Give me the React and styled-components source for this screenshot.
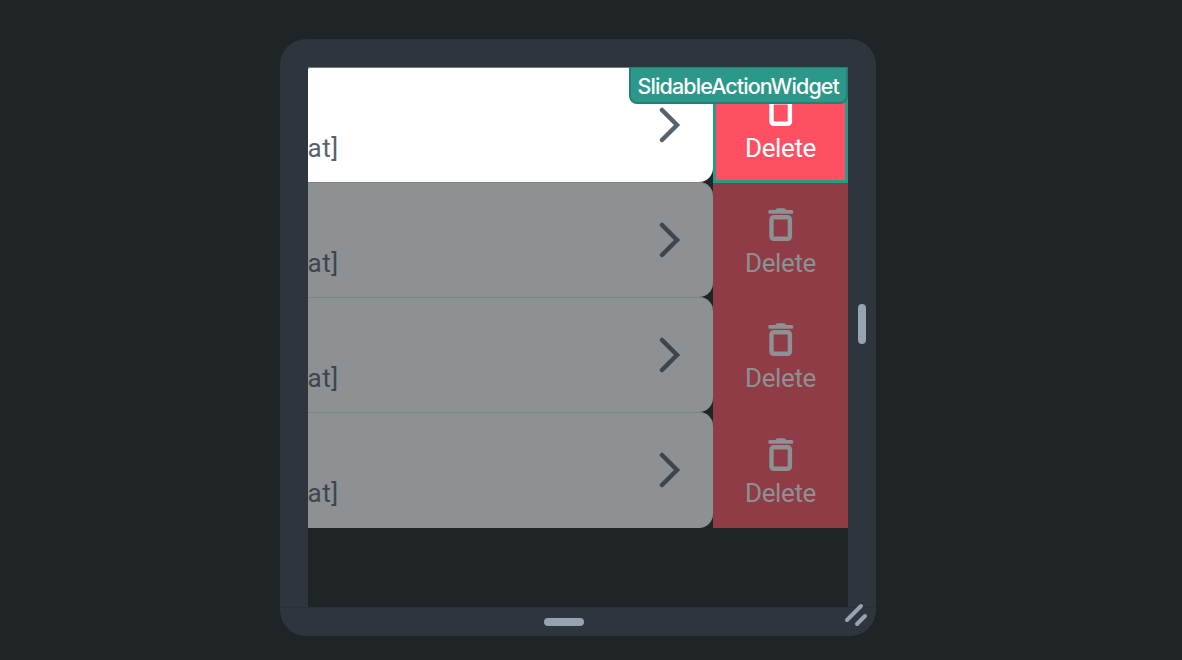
import React from "react";
import styled, { createGlobalStyle } from "styled-components";

const GlobalStyle = createGlobalStyle`
  * { box-sizing: border-box; }
  body { margin: 0; background: #1f2427; font-family: Roboto, sans-serif; }
`;

const Page = styled.main`
  height: 660px;
  padding: 39px 0 0 280px;
  background: #1f2427;
  overflow: hidden;
`;

const Frame = styled.section`
  position: relative;
  width: 596px;
  height: 596.5px;
  padding: 28px;
  border-radius: 26px;
  background: #2e353d;
`;

const Screen = styled.div`
  position: relative;
  width: 540px;
  height: 540px;
  background: #1f2427;
  overflow: hidden;
`;

const Row = styled.div`
  display: flex;
  height: 115.15px;
  --tile: ${(p) => (p.$active ? "#ffffff" : "#8d9193")};
  --ink: ${(p) => (p.$active ? "#57636c" : "#3d464c")};
  --action: ${(p) => (p.$active ? "#ff5063" : "#8f3c46")};
  --label: ${(p) => (p.$active ? "#ffffff" : "#8d9193")};
`;

const Tile = styled.div`
  display: flex;
  justify-content: space-between;
  width: 405px;
  padding: 0 32px 0 0;
  border-radius: ${(p) => (p.$active ? "2px 14px 14px 0" : "0 14px 14px 0")};
  background: var(--tile);
  box-shadow: inset 0 1px ${(p) => (p.$active ? "#747a7f" : "#7d8285")};
  color: var(--ink);
`;

const Subtitle = styled.span`
  padding-top: 64.8px;
  margin-left: -0.6px;
  font-size: 26px;
  line-height: 32px;
  letter-spacing: 0.6px;
`;

const Chevron = styled.svg`
  width: 22px;
  height: 36px;
  margin-top: 40px;
  fill: none;
  stroke: currentColor;
  stroke-width: 4.5;
  stroke-linecap: round;
  stroke-linejoin: miter;
`;

const Action = styled.div`
  display: flex;
  flex-direction: column;
  align-items: center;
  width: 135px;
  padding-top: ${(p) => (p.$active ? 23 : 26)}px;
  position: relative;
  z-index: ${(p) => (p.$active ? 1 : 0)};
  border: ${(p) => (p.$active ? "3px solid #2c9889" : "0")};
  margin-bottom: ${(p) => (p.$active ? "-1px" : "0")};
  background: var(--action);
  color: var(--label);
`;

const ActionText = styled.span`
  margin-top: 4.8px;
  font-size: 26px;
  line-height: 32px;
  letter-spacing: -0.4px;
`;

const Trash = styled.svg`
  display: block;
  width: 26px;
  height: 34px;
`;

const Badge = styled.div`
  position: absolute;
  z-index: 2;
  top: 0;
  right: 0;
  width: 219.5px;
  height: 37px;
  border: 2px solid #257f74;
  border-top-width: 1px;
  border-radius: 0 0 8px 8px;
  background: #2c9889;
  color: #fff;
  font: 500 21.5px/36px Inter, sans-serif;
  letter-spacing: -0.9px;
  text-align: center;
  white-space: nowrap;
`;

const Handle = styled.span`
  position: absolute;
  border-radius: 4px;
  background: #96a3b0;
  ${(p) => p.$side
    ? "right: 10px; top: 264.5px; width: 8px; height: 40px;"
    : "left: 264px; bottom: 10px; width: 40px; height: 8px;"}
`;

const Seam = styled.span`
  position: absolute;
  left: 0;
  bottom: 28px;
  width: 100%;
  height: 1px;
  background: #293138;
`;

const ResizeGrip = styled.svg`
  position: absolute;
  right: 8.5px;
  bottom: 8.5px;
  width: 24px;
  height: 26px;
  stroke: #96a3b0;
  stroke-width: 4;
  stroke-linecap: round;
`;

const TrashIcon = () => (
  <Trash viewBox="0 0 26 34">
    <path d="M1.6 2.1H7.3L9 .3H16.6L18.3 2.1H24Q25.3 2.1 25.3 3.9T24 5.8H1.6Q.3 5.8.3 3.9T1.6 2.1Z" fill="currentColor" />
    <rect x="3.5" y="9.2" width="18.4" height="21.6" rx="2.2" fill="none" stroke="currentColor" strokeWidth="4.4" />
  </Trash>
);

const SlidableRow = ({ active }) => (
  <Row $active={active}>
    <Tile $active={active}>
      <Subtitle>at]</Subtitle>
      <Chevron viewBox="0 0 22 36"><path d="M3 3L18 18L3 33" /></Chevron>
    </Tile>
    <Action $active={active}>
      <TrashIcon />
      <ActionText>Delete</ActionText>
    </Action>
  </Row>
);

export default function App() {
  return (
    <>
      <GlobalStyle />
      <Page>
        <Frame>
          <Screen>
            <SlidableRow active />
            <SlidableRow />
            <SlidableRow />
            <SlidableRow />
            <Badge>SlidableActionWidget</Badge>
          </Screen>
          <Seam />
          <Handle $side />
          <Handle />
          <ResizeGrip viewBox="0 0 24 26"><path d="M3 19L17 5M13 23L21 15" /></ResizeGrip>
        </Frame>
      </Page>
    </>
  );
}
